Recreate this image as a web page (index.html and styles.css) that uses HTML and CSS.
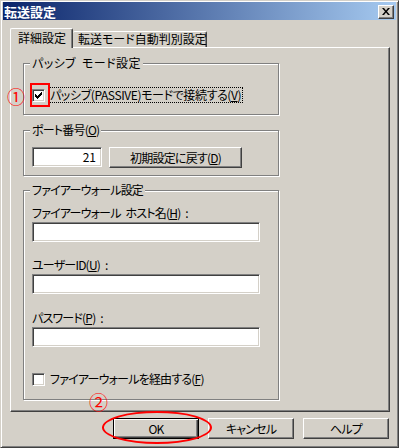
FILE: index.html
```html
<!DOCTYPE html>
<html lang="ja">
<head>
<meta charset="utf-8">
<title>転送設定</title>
<link rel="stylesheet" href="styles.css">
</head>
<body>
<div class="window">
  <div class="titlebar">
    <span class="title">転送設定</span>
    <div class="close"><svg width="8" height="7" viewBox="0 0 8 7"><path d="M0 0h2l2 2.4L6 0h2L5 3.5 8 7H6L4 4.6 2 7H0l3-3.5z" fill="#000"/></svg></div>
  </div>
  <div class="body">
    <div class="tabs">
      <div class="tab active">詳細設定</div>
      <div class="tab second">転送モード自動判別設定</div>
    </div>
    <div class="panel">
      <div class="group g1">
        <span class="legend">パッシブ モード設定</span>
        <div class="check-row">
          <span class="checkbox"><svg width="7" height="7" viewBox="0 0 7 7"><path d="M0 2h1v1h1v1h1V3h1V2h1V1h1V0h1v3H6v1H5v1H4v1H3v1H2V6H1V5H0z" fill="#000"/></svg></span>
          <span class="label focus">パッシブ(PASSIVE)モードで接続する(<u>V</u>)</span>
        </div>
      </div>
      <div class="group g2">
        <span class="legend">ポート番号(<u>O</u>)</span>
        <div class="row">
          <div class="field port">21</div>
          <div class="btn reset">初期設定に戻す(<u>D</u>)</div>
        </div>
      </div>
      <div class="group g3">
        <span class="legend">ファイアーウォール設定</span>
        <div class="flabel first">ファイアーウォール ホスト名(<u>H</u>) :</div>
        <div class="field wide"></div>
        <div class="flabel">ユーザーID(<u>U</u>) :</div>
        <div class="field wide"></div>
        <div class="flabel third">パスワード(<u>P</u>) :</div>
        <div class="field wide"></div>
        <div class="check-row fw">
          <span class="checkbox"></span>
          <span class="label">ファイアーウォールを経由する(<u>F</u>)</span>
        </div>
      </div>
    </div>
    <div class="buttons">
      <div class="btn dlg default">OK</div>
      <div class="btn dlg">キャンセル</div>
      <div class="btn dlg">ヘルプ</div>
    </div>
  </div>
  <span class="mark mark1">①</span>
  <span class="redbox"></span>
  <span class="mark mark2">②</span>
  <span class="ellipse"></span>
</div>
</body>
</html>
```

FILE: styles.css
```css
* { box-sizing: border-box; }
html, body { margin: 0; padding: 0; }
body {
  width: 399px;
  height: 448px;
  background: #d4d0c8;
  font-family: "Noto Sans CJK JP", sans-serif;
  font-size: 12px;
  line-height: 12px;
  color: #000;
  font-feature-settings: "palt";
  letter-spacing: -0.8px;
  word-spacing: 3px;
}
.window {
  position: relative;
  width: 399px;
  height: 448px;
  background: #d4d0c8;
  border-style: solid;
  border-width: 1px;
  border-color: #d4d0c8 #404040 #404040 #d4d0c8;
  box-shadow: inset 1px 1px #fff, inset -1px -1px #808080;
  padding: 1px 2px 2px 2px;
}
.titlebar {
  height: 18px;
  display: flex;
  align-items: center;
  justify-content: space-between;
  background: linear-gradient(to right, #0a246a, #a6caf0);
  padding: 0 2px 0 1px;
}
.title {
  color: #fff;
  font-weight: bold;
  font-size: 13px;
  line-height: 13px;
  letter-spacing: 0;
}
.close {
  align-self: flex-start;
  margin-top: 3px;
  width: 16px;
  height: 14px;
  background: #d4d0c8;
  border-style: solid;
  border-width: 1px;
  border-color: #fff #404040 #404040 #fff;
  box-shadow: inset -1px -1px #808080;
  display: flex;
  align-items: center;
  justify-content: center;
  padding-bottom: 1px;
}
.close svg { display: block; }
.body {
  padding: 8px 6px 0 7px;
}
.tabs {
  height: 19px;
  display: flex;
  align-items: flex-end;
}
.tab {
  background: #d4d0c8;
  border-style: solid;
  border-width: 1px 1px 0 1px;
  border-color: #fff #404040 #fff #fff;
  border-radius: 2px 2px 0 0;
  box-shadow: inset -1px 0 #808080;
  height: 16px;
  padding: 1px 4px 0 4px;
  white-space: nowrap;
  letter-spacing: 0;
}
.tab.active {
  position: relative;
  z-index: 1;
  height: 20px;
  width: 63px;
  margin-bottom: -1px;
  padding: 3px 0 0 7px;
}
.tab.second {
  width: 134px;
  border-left: none;
  padding-left: 5px;
}
.panel {
  height: 365px;
  border-style: solid;
  border-width: 1px;
  border-color: #fff #404040 #404040 #fff;
  box-shadow: inset -1px -1px #808080;
  padding: 15px 0 0 12px;
}
.group {
  position: relative;
  width: 256px;
  border: 1px solid #808080;
  box-shadow: inset 1px 1px #fff, 1px 1px #fff;
  padding-left: 8px;
}
.legend {
  position: absolute;
  top: -7px;
  left: 6px;
  padding: 0 2px;
  background: #d4d0c8;
  white-space: nowrap;
}
.g1 .legend { letter-spacing: 0.4px; }
.g1 { height: 52px; padding-top: 23px; margin-bottom: 15px; }
.g2 { height: 46px; padding-top: 16px; margin-bottom: 14px; }
.g3 { height: 210px; padding-top: 16px; }
.check-row {
  display: flex;
  align-items: center;
  gap: 3px;
}
.checkbox {
  width: 13px;
  height: 13px;
  flex: none;
  background: #fff;
  border-style: solid;
  border-width: 1px;
  border-color: #808080 #fff #fff #808080;
  box-shadow: inset 1px 1px #404040, inset -1px -1px #d4d0c8;
  display: flex;
  align-items: center;
  justify-content: center;
}
.checkbox svg { display: block; }
.label {
  border: 1px dotted transparent;
  padding: 1px 1px 1px 1px;
  white-space: nowrap;
}
.label.focus { border-color: #000; letter-spacing: -0.4px; }
.row {
  display: flex;
  gap: 7px;
  align-items: flex-start;
}
.field {
  background: #fff;
  height: 20px;
  border-style: solid;
  border-width: 1px;
  border-color: #808080 #fff #fff #808080;
  box-shadow: inset 1px 1px #404040, inset -1px -1px #d4d0c8;
}
.field.port {
  width: 70px;
  text-align: right;
  padding: 3px 5px 0 0;
  letter-spacing: 0;
}
.field.wide { width: 228px; margin-top: 3px; }
.flabel { margin-top: 17px; white-space: nowrap; }
.flabel.first { margin-top: 0; }
.flabel.third { margin-top: 18px; }
.check-row.fw { margin-top: 24px; }
.btn {
  height: 21px;
  background: #d4d0c8;
  border-style: solid;
  border-width: 1px;
  border-color: #fff #404040 #404040 #fff;
  box-shadow: inset -1px -1px #808080;
  display: flex;
  align-items: center;
  justify-content: center;
  white-space: nowrap;
}
.btn.reset { width: 133px; }
.buttons {
  display: flex;
  justify-content: flex-end;
  gap: 9px;
  margin-top: 6px;
  padding-right: 1px;
}
.btn.dlg { width: 86px; }
.btn.default {
  border-color: #000;
  box-shadow: inset 1px 1px #fff, inset -1px -1px #404040, inset -2px -2px #808080;
}
.mark {
  position: absolute;
  color: #f00;
  line-height: 1;
  letter-spacing: 0;
  font-feature-settings: normal;
}
.mark1 { left: 6px; top: 86px; font-size: 18px; }
.mark2 { left: 88px; top: 391px; font-size: 19px; }
.redbox {
  position: absolute;
  left: 29px;
  top: 82px;
  width: 20px;
  height: 24px;
  border: 2px solid #f00;
}
.ellipse {
  position: absolute;
  left: 101px;
  top: 410px;
  width: 110px;
  height: 33px;
  border: 2px solid #f00;
  border-radius: 50%;
}
```
